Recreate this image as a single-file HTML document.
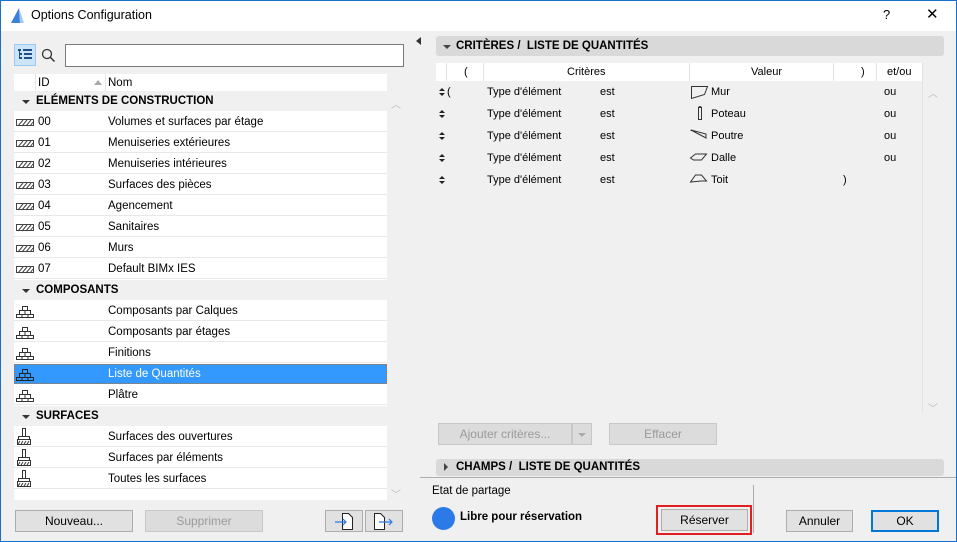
<!DOCTYPE html>
<html><head><meta charset="utf-8"><style>
*{box-sizing:border-box;margin:0;padding:0}
body{width:957px;height:542px;overflow:hidden;font-family:"Liberation Sans",sans-serif;font-size:12px;color:#000;background:#f0f0f0;position:relative}
.a{position:absolute}
.win{left:0;top:0;width:957px;height:542px;border:1px solid #1a6fc9}
.title{left:1px;top:1px;width:955px;height:30px;background:#fff}
.row{position:absolute;left:14px;width:373px;height:20px;background:#fff;border-bottom:1px solid #e8e8e8}
.row span{position:absolute;top:4px;font-size:11.5px}
.cat{position:absolute;left:14px;width:373px;height:20px;background:#f0f0f0;font-weight:bold;font-size:11.5px}
.cat span{position:absolute;left:22px;top:4px}
.cat i{position:absolute;left:8px;top:9px;border-left:4px solid transparent;border-right:4px solid transparent;border-top:4px solid #333}
.btn{position:absolute;background:#e1e1e1;border:1px solid #adadad;text-align:center;font-size:12px;line-height:20px}
.dis{color:#9a9a9a;background:#dcdcdc;border-color:#c8c8c8}
.tr span{position:absolute;font-size:11px}
.ud{position:absolute;left:439px;width:6px;height:9px}
.ud:before{content:"";position:absolute;left:0;top:0;border-left:3px solid transparent;border-right:3px solid transparent;border-bottom:3px solid #222}
.ud:after{content:"";position:absolute;left:0;top:5px;border-left:3px solid transparent;border-right:3px solid transparent;border-top:3px solid #222}
</style></head><body>
<div class="a win"></div>
<div class="a title"></div>
<svg class="a" style="left:9px;top:7px" width="17" height="17"><path d="M2 16 L10 1 L11 16Z" fill="#3a7fd9"/><path d="M11 16 L10 1 L15 16Z" fill="#a8c8f0"/></svg>
<div class="a" style="left:31px;top:8px;font-size:12.5px">Options Configuration</div>
<div class="a" style="left:883px;top:7px;font-size:13px">?</div>
<div class="a" style="left:926px;top:5px;font-size:15px">✕</div>

<div class="a" style="left:14px;top:44px;width:22px;height:22px;background:#cce4f7;border:1px solid #99c9ef"></div>
<svg class="a" style="left:17px;top:48px" width="16" height="14"><g fill="#1f4f86"><rect x="1" y="1" width="3" height="2"/><rect x="6" y="1" width="9" height="2"/><rect x="3" y="5" width="2" height="2"/><rect x="7" y="5" width="8" height="2"/><rect x="3" y="9" width="2" height="2"/><rect x="7" y="9" width="8" height="2"/><rect x="2" y="3" width="1" height="8"/></g></svg>
<svg class="a" style="left:41px;top:48px" width="15" height="15"><circle cx="6" cy="6" r="4.5" fill="none" stroke="#333" stroke-width="1.3"/><path d="M9.5 9.5 L13.5 13.5" stroke="#333" stroke-width="1.5"/></svg>
<div class="a" style="left:65px;top:44px;width:339px;height:23px;background:#fff;border:1px solid #7a7a7a"></div>

<div class="a" style="left:14px;top:74px;width:373px;height:426px;background:#fff"></div>
<div class="a" style="left:35px;top:74px;width:1px;height:17px;background:#e6e6e6"></div>
<div class="a" style="left:105px;top:74px;width:1px;height:17px;background:#e6e6e6"></div>
<div class="a" style="left:38px;top:77px;font-size:11.5px">ID</div>
<div class="a" style="left:94px;top:80px;border-left:4px solid transparent;border-right:4px solid transparent;border-bottom:5px solid #aaa"></div>
<div class="a" style="left:108px;top:77px;font-size:11.5px">Nom</div>
<div class="a" style="left:391px;top:96px;color:#bbb;font-size:10px">︿</div>
<div class="a" style="left:391px;top:486px;color:#bbb;font-size:10px">﹀</div>

<div class="cat" style="top:91px"><i></i><span>ELÉMENTS DE CONSTRUCTION</span></div>
<div class="row" style="top:112px"><svg class="a" style="left:2px;top:7px" width="18" height="8"><rect x="0.5" y="0.5" width="17" height="6" fill="#fff" stroke="#444"/><path d="M2 7L7 1M6 7L11 1M10 7L15 1M14 7L17 3" stroke="#444"/></svg><span style="left:24px">00</span><span style="left:94px">Volumes et surfaces par étage</span></div>
<div class="row" style="top:133px"><svg class="a" style="left:2px;top:7px" width="18" height="8"><rect x="0.5" y="0.5" width="17" height="6" fill="#fff" stroke="#444"/><path d="M2 7L7 1M6 7L11 1M10 7L15 1M14 7L17 3" stroke="#444"/></svg><span style="left:24px">01</span><span style="left:94px">Menuiseries extérieures</span></div>
<div class="row" style="top:154px"><svg class="a" style="left:2px;top:7px" width="18" height="8"><rect x="0.5" y="0.5" width="17" height="6" fill="#fff" stroke="#444"/><path d="M2 7L7 1M6 7L11 1M10 7L15 1M14 7L17 3" stroke="#444"/></svg><span style="left:24px">02</span><span style="left:94px">Menuiseries intérieures</span></div>
<div class="row" style="top:175px"><svg class="a" style="left:2px;top:7px" width="18" height="8"><rect x="0.5" y="0.5" width="17" height="6" fill="#fff" stroke="#444"/><path d="M2 7L7 1M6 7L11 1M10 7L15 1M14 7L17 3" stroke="#444"/></svg><span style="left:24px">03</span><span style="left:94px">Surfaces des pièces</span></div>
<div class="row" style="top:196px"><svg class="a" style="left:2px;top:7px" width="18" height="8"><rect x="0.5" y="0.5" width="17" height="6" fill="#fff" stroke="#444"/><path d="M2 7L7 1M6 7L11 1M10 7L15 1M14 7L17 3" stroke="#444"/></svg><span style="left:24px">04</span><span style="left:94px">Agencement</span></div>
<div class="row" style="top:217px"><svg class="a" style="left:2px;top:7px" width="18" height="8"><rect x="0.5" y="0.5" width="17" height="6" fill="#fff" stroke="#444"/><path d="M2 7L7 1M6 7L11 1M10 7L15 1M14 7L17 3" stroke="#444"/></svg><span style="left:24px">05</span><span style="left:94px">Sanitaires</span></div>
<div class="row" style="top:238px"><svg class="a" style="left:2px;top:7px" width="18" height="8"><rect x="0.5" y="0.5" width="17" height="6" fill="#fff" stroke="#444"/><path d="M2 7L7 1M6 7L11 1M10 7L15 1M14 7L17 3" stroke="#444"/></svg><span style="left:24px">06</span><span style="left:94px">Murs</span></div>
<div class="row" style="top:259px"><svg class="a" style="left:2px;top:7px" width="18" height="8"><rect x="0.5" y="0.5" width="17" height="6" fill="#fff" stroke="#444"/><path d="M2 7L7 1M6 7L11 1M10 7L15 1M14 7L17 3" stroke="#444"/></svg><span style="left:24px">07</span><span style="left:94px">Default BIMx IES</span></div>

<div class="cat" style="top:280px"><i></i><span>COMPOSANTS</span></div>
<div class="row" style="top:301px"><svg class="a" style="left:2px;top:4px" width="18" height="13"><path d="M6.5 1.5h5v4h-5zM3.5 5.5h11v4h-11zM0.5 9.5h17v3h-17zM9 5.5v4M6 9.5v3M12 9.5v3" fill="none" stroke="#333"/></svg><span style="left:94px">Composants par Calques</span></div>
<div class="row" style="top:322px"><svg class="a" style="left:2px;top:4px" width="18" height="13"><path d="M6.5 1.5h5v4h-5zM3.5 5.5h11v4h-11zM0.5 9.5h17v3h-17zM9 5.5v4M6 9.5v3M12 9.5v3" fill="none" stroke="#333"/></svg><span style="left:94px">Composants par étages</span></div>
<div class="row" style="top:343px"><svg class="a" style="left:2px;top:4px" width="18" height="13"><path d="M6.5 1.5h5v4h-5zM3.5 5.5h11v4h-11zM0.5 9.5h17v3h-17zM9 5.5v4M6 9.5v3M12 9.5v3" fill="none" stroke="#333"/></svg><span style="left:94px">Finitions</span></div>
<div class="row" style="top:364px;background:#3399ff;border:1px dotted #c07020;color:#fff"><svg class="a" style="left:1px;top:3px" width="18" height="13"><path d="M6.5 1.5h5v4h-5zM3.5 5.5h11v4h-11zM0.5 9.5h17v3h-17zM9 5.5v4M6 9.5v3M12 9.5v3" fill="none" stroke="#222"/></svg><span style="left:93px;top:3px">Liste de Quantités</span></div>
<div class="row" style="top:385px"><svg class="a" style="left:2px;top:4px" width="18" height="13"><path d="M6.5 1.5h5v4h-5zM3.5 5.5h11v4h-11zM0.5 9.5h17v3h-17zM9 5.5v4M6 9.5v3M12 9.5v3" fill="none" stroke="#333"/></svg><span style="left:94px">Plâtre</span></div>

<div class="cat" style="top:406px"><i></i><span>SURFACES</span></div>
<div class="row" style="top:427px"><svg class="a" style="left:2px;top:1px" width="16" height="18"><path d="M6.5 0.5h3v8h-3zM2.5 8.5h11v3h-11zM1.5 11.5h13v5h-13z" fill="#fff" stroke="#333"/><path d="M2 16l2-3M5 16l2-3M8 16l2-3M11 16l2-3" stroke="#333"/></svg><span style="left:94px">Surfaces des ouvertures</span></div>
<div class="row" style="top:448px"><svg class="a" style="left:2px;top:1px" width="16" height="18"><path d="M6.5 0.5h3v8h-3zM2.5 8.5h11v3h-11zM1.5 11.5h13v5h-13z" fill="#fff" stroke="#333"/><path d="M2 16l2-3M5 16l2-3M8 16l2-3M11 16l2-3" stroke="#333"/></svg><span style="left:94px">Surfaces par éléments</span></div>
<div class="row" style="top:469px"><svg class="a" style="left:2px;top:1px" width="16" height="18"><path d="M6.5 0.5h3v8h-3zM2.5 8.5h11v3h-11zM1.5 11.5h13v5h-13z" fill="#fff" stroke="#333"/><path d="M2 16l2-3M5 16l2-3M8 16l2-3M11 16l2-3" stroke="#333"/></svg><span style="left:94px">Toutes les surfaces</span></div>

<div class="btn" style="left:15px;top:510px;width:118px;height:22px">Nouveau...</div>
<div class="btn dis" style="left:145px;top:510px;width:118px;height:22px">Supprimer</div>
<div class="btn" style="left:325px;top:510px;width:38px;height:22px"></div>
<div class="btn" style="left:365px;top:510px;width:38px;height:22px"></div>
<svg class="a" style="left:333px;top:512px" width="22" height="19"><path d="M9.5 1.5h6l4 4v12h-10z" fill="#fff" stroke="#222"/><path d="M2 10h11M10 7l3 3-3 3" fill="none" stroke="#2a7be4" stroke-width="1.2"/></svg>
<svg class="a" style="left:373px;top:512px" width="22" height="19"><path d="M1.5 1.5h6l4 4v12h-10z" fill="#fff" stroke="#222"/><path d="M6 10h13M16 7l3 3-3 3" fill="none" stroke="#2a7be4" stroke-width="1.2"/></svg>

<div class="a" style="left:416px;top:37px;border-top:4px solid transparent;border-bottom:4px solid transparent;border-right:5px solid #333"></div>

<div class="a" style="left:436px;top:36px;width:508px;height:20px;background:#d9d9d9;border-radius:3px"></div>
<div class="a" style="left:443px;top:45px;border-left:4px solid transparent;border-right:4px solid transparent;border-top:4px solid #444"></div>
<div class="a" style="left:456px;top:40px;font-weight:bold;font-size:11.5px">CRITÈRES /&nbsp; LISTE DE QUANTITÉS</div>

<div class="a" style="left:436px;top:63px;width:486px;height:18px;background:#fff"></div>
<div class="a" style="left:446px;top:63px;width:1px;height:18px;background:#e3e3e3"></div>
<div class="a" style="left:483px;top:63px;width:1px;height:18px;background:#e3e3e3"></div>
<div class="a" style="left:689px;top:63px;width:1px;height:18px;background:#e3e3e3"></div>
<div class="a" style="left:833px;top:63px;width:1px;height:18px;background:#e3e3e3"></div>
<div class="a" style="left:876px;top:63px;width:1px;height:18px;background:#e3e3e3"></div>
<div class="a" style="left:922px;top:63px;width:1px;height:350px;background:#e3e3e3"></div>
<div class="a" style="left:464px;top:66px;font-size:11px">(</div>
<div class="a" style="left:567px;top:66px;font-size:11px">Critères</div>
<div class="a" style="left:751px;top:66px;font-size:11px">Valeur</div>
<div class="a" style="left:861px;top:66px;font-size:11px">)</div>
<div class="a" style="left:887px;top:66px;font-size:11px">et/ou</div>
<div class="a" style="left:928px;top:85px;color:#bbb;font-size:10px">︿</div>
<div class="a" style="left:928px;top:400px;color:#bbb;font-size:10px">﹀</div>

<div class="ud" style="top:88px"></div><div class="ud" style="top:110px"></div><div class="ud" style="top:132px"></div><div class="ud" style="top:154px"></div><div class="ud" style="top:176px"></div>
<div class="tr">
<span style="left:447px;top:86px">(</span><span style="left:487px;top:86px">Type d'élément</span><span style="left:600px;top:86px">est</span><span style="left:711px;top:86px">Mur</span><span style="left:884px;top:86px">ou</span>
<span style="left:487px;top:108px">Type d'élément</span><span style="left:600px;top:108px">est</span><span style="left:711px;top:108px">Poteau</span><span style="left:884px;top:108px">ou</span>
<span style="left:487px;top:130px">Type d'élément</span><span style="left:600px;top:130px">est</span><span style="left:711px;top:130px">Poutre</span><span style="left:884px;top:130px">ou</span>
<span style="left:487px;top:152px">Type d'élément</span><span style="left:600px;top:152px">est</span><span style="left:711px;top:152px">Dalle</span><span style="left:884px;top:152px">ou</span>
<span style="left:487px;top:174px">Type d'élément</span><span style="left:600px;top:174px">est</span><span style="left:711px;top:174px">Toit</span><span style="left:843px;top:174px">)</span>
</div>
<svg class="a" style="left:689px;top:83px" width="22" height="110" fill="none" stroke="#333">
<path d="M2.5 3.5h16l-3 8l-13 4z"/>
<path d="M9.5 24.5h3v12h-3zM9.5 24.5q1.5-2 3 0"/>
<path d="M2 47l15 4v4l-15-8zM2 47v1"/>
<path d="M1.5 75l5-4h11l-5 6h-8z"/>
<path d="M1.5 99l5-7h6l5 6h-5z"/>
</svg>

<div class="btn dis" style="left:438px;top:423px;width:134px;height:22px">Ajouter critères...</div>
<div class="btn dis" style="left:572px;top:423px;width:20px;height:22px"></div>
<div class="a" style="left:578px;top:433px;border-left:4px solid transparent;border-right:4px solid transparent;border-top:4px solid #aaa"></div>
<div class="btn dis" style="left:609px;top:423px;width:108px;height:22px">Effacer</div>

<div class="a" style="left:436px;top:459px;width:508px;height:17px;background:#d9d9d9;border-radius:3px"></div>
<div class="a" style="left:444px;top:463px;border-top:4px solid transparent;border-bottom:4px solid transparent;border-left:4px solid #444"></div>
<div class="a" style="left:456px;top:461px;font-weight:bold;font-size:11.5px">CHAMPS /&nbsp; LISTE DE QUANTITÉS</div>
<div class="a" style="left:420px;top:477px;width:536px;height:1px;background:#adadad"></div>

<div class="a" style="left:432px;top:485px;font-size:11.5px">Etat de partage</div>
<div class="a" style="left:432px;top:507px;width:23px;height:23px;border-radius:50%;background:#2b7ae8"></div>
<div class="a" style="left:460px;top:511px;font-weight:bold;font-size:11.5px">Libre pour réservation</div>
<div class="a" style="left:656px;top:505px;width:96px;height:30px;border:2px solid #e02020"></div>
<div class="btn" style="left:661px;top:509px;width:87px;height:22px">Réserver</div>
<div class="a" style="left:753px;top:485px;width:1px;height:48px;background:#adadad"></div>
<div class="btn" style="left:786px;top:510px;width:67px;height:22px">Annuler</div>
<div class="btn" style="left:871px;top:510px;width:68px;height:22px;border:2px solid #0078d7;line-height:18px">OK</div>
</body></html>
